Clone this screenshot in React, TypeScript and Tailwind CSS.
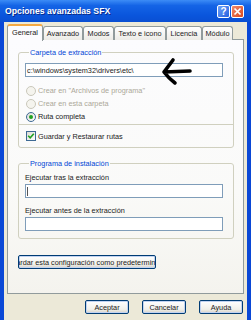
import React from "react";

const font = { fontFamily: '"Liberation Sans", Arial, sans-serif' };

function Radio({ label, checked, disabled }: { label: string; checked?: boolean; disabled?: boolean }) {
  return (
    <div className="flex items-center h-[13px] pl-[7px] gap-[2px]">
      <span
        className={
          "w-[10px] h-[10px] rounded-full border flex items-center justify-center " +
          (disabled ? "border-[#CAC8BB] bg-[#F5F4EE]" : "border-[#3E6A94] bg-[linear-gradient(135deg,#DCDCD5,#FFFFFF)]")
        }
      >
        {checked && <span className="w-[4px] h-[4px] rounded-full bg-[#21A121]" />}
      </span>
      <span className={disabled ? "text-[#ACA899]" : "text-[#222]"}>{label}</span>
    </div>
  );
}

function Tab({ label, w, selected }: { label: string; w: string; selected?: boolean }) {
  if (selected) {
    return (
      <div
        className={
          w +
          " h-[17px] relative z-10 -mb-px flex items-center justify-center rounded-t-[3px] border-x border-[#919B9C] border-t-[2px] border-t-[#F5A943] bg-[#FCFCFE] pb-[2px]"
        }
      >
        {label}
      </div>
    );
  }
  return (
    <div
      className={
        w +
        " h-[14px] flex items-center justify-center rounded-t-[3px] border border-b-0 border-[#919B9C] bg-[linear-gradient(to_bottom,#FFFFFF,#ECEBE6)]"
      }
    >
      {label}
    </div>
  );
}

function XpButton({ label, w }: { label: string; w: string }) {
  return (
    <div
      className={
        w +
        " h-[14px] flex items-center justify-center rounded-[2px] border border-[#003C74] bg-[linear-gradient(to_bottom,#FFFFFF,#F0F0EA_70%,#D6D0C5)] text-[#222] shadow-[inset_0_0_0_1px_#C2D3F1]"
      }
    >
      {label}
    </div>
  );
}

export default function App() {
  return (
    <div
      className="w-[251px] h-[320px] overflow-hidden bg-[#0A48D6] flex flex-col text-[7.3px] leading-[9px] text-[#222]"
      style={font}
    >
      {/* Title bar */}
      <div className="h-[22px] shrink-0 flex items-center justify-between pl-[5px] pr-[7px] bg-[linear-gradient(to_bottom,#3C8CF6,#1464E6_25%,#0A55DC_70%,#0A4FD2)]">
        <span className="text-white font-bold text-[8.7px] leading-[10px] [text-shadow:1px_1px_0_#0A2B8A]">
          Opciones avanzadas SFX
        </span>
        <div className="flex gap-[1px] mt-[1px]">
          <div className="w-[13px] h-[13px] rounded-[2px] border border-white bg-[linear-gradient(135deg,#6FA2F8,#2460E0)] flex items-center justify-center text-white font-bold text-[10px] leading-[10px]">
            ?
          </div>
          <div className="w-[13px] h-[13px] rounded-[2px] border border-white bg-[linear-gradient(135deg,#F08A6C,#D9481E)] flex items-center justify-center">
            <svg width="9" height="9" viewBox="0 0 9 9">
              <path d="M1.5 1.5 L7.5 7.5 M7.5 1.5 L1.5 7.5" stroke="white" strokeWidth="1.7" />
            </svg>
          </div>
        </div>
      </div>

      {/* Body */}
      <div className="flex-1 ml-[4px] mr-[4px] bg-[#ECE9D8] flex flex-col pt-[2px] relative">
        {/* Tabs */}
        <div className="flex items-end h-[16px] ml-[3px] -mb-px relative z-10">
          <Tab label="General" w="w-[36px]" selected />
          <Tab label="Avanzado" w="w-[40px]" />
          <Tab label="Modos" w="w-[31px]" />
          <Tab label="Texto e icono" w="w-[52px]" />
          <Tab label="Licencia" w="w-[36px]" />
          <Tab label="Módulo" w="w-[31px]" />
        </div>

        {/* Panel */}
        <div className="ml-[3px] mr-[3px] h-[255px] border border-[#919B9C] bg-[linear-gradient(to_bottom,#FCFCFE,#FAFAF8_60%,#F4F3EE)] flex flex-col px-[10px] pt-[8px]">
          <fieldset className="border border-[#D0D0BF] rounded-[3px] w-[216px] pl-[6px] pr-[10px] pb-[5px]">
            <legend className="text-[#0046D5] px-[1px] ml-[4px] leading-[9px]">Carpeta de extracción</legend>
            <div className="mt-[6px] h-[14px] border border-[#7F9DB9] bg-white flex items-center pl-[1px] text-[#222]">
              c:\windows\system32\drivers\etc\
            </div>
            <div className="mt-[7px] -ml-[6px] -mr-[10px]">
              <Radio label={'Crear en "Archivos de programa"'} disabled />
              <Radio label="Crear en esta carpeta" disabled />
              <Radio label="Ruta completa" checked />
            </div>
            <div className="mt-[1px] -ml-[6px] -mr-[10px] h-px bg-[#D0D0BF]" />
            <div className="mt-[5px] flex items-center h-[12px] pl-[1px] gap-[2px]">
              <span className="w-[10px] h-[10px] border border-[#3E6A94] bg-[linear-gradient(135deg,#DCDCD5,#FFFFFF)] flex items-center justify-center">
                <svg width="8" height="8" viewBox="0 0 8 8">
                  <path d="M1.2 3.8 L3.2 5.8 L6.8 1.8" stroke="#21A121" strokeWidth="1.6" fill="none" />
                </svg>
              </span>
              <span>Guardar y Restaurar rutas</span>
            </div>
          </fieldset>

          <fieldset className="mt-[11px] border border-[#D0D0BF] rounded-[3px] w-[216px] pl-[6px] pr-[10px] pb-[7px]">
            <legend className="text-[#0046D5] px-[1px] ml-[4px] leading-[9px]">Programa de instalación</legend>
            <div className="mt-[5px] leading-[10px]">Ejecutar tras la extracción</div>
            <div className="mt-[1px] h-[14px] border border-[#7F9DB9] bg-white flex items-center pl-[1px]">
              <span className="w-px h-[9px] bg-[#555]" />
            </div>
            <div className="mt-[8px] leading-[10px]">Ejecutar antes de la extracción</div>
            <div className="mt-[1px] h-[14px] border border-[#7F9DB9] bg-white" />
          </fieldset>

          <div className="mt-[16px] w-[138px] h-[14px] overflow-hidden whitespace-nowrap flex items-center justify-center rounded-[2px] border border-[#003C74] bg-[linear-gradient(to_bottom,#FFFFFF,#F0F0EA_70%,#D6D0C5)] shadow-[inset_0_0_0_1px_#C2D3F1]">
            <span className="shrink-0">Guardar esta configuración como predeterminada</span>
          </div>
        </div>

        {/* Bottom buttons */}
        <div className="mt-[6px] flex justify-end gap-[13px] pr-[4px]">
          <XpButton label="Aceptar" w="w-[44px]" />
          <XpButton label="Cancelar" w="w-[44px]" />
          <XpButton label="Ayuda" w="w-[44px]" />
        </div>
      </div>

      {/* Hand-drawn arrow overlay */}
      <svg className="absolute left-[160px] top-[56px]" width="34" height="30" viewBox="0 0 34 30">
        <path
          d="M4 16 L30 15 M13 4 C10 8 7 12 4 16 C7 20 11 24 15 27"
          stroke="black"
          strokeWidth="3.6"
          strokeLinecap="round"
          strokeLinejoin="round"
          fill="none"
        />
      </svg>
    </div>
  );
}
